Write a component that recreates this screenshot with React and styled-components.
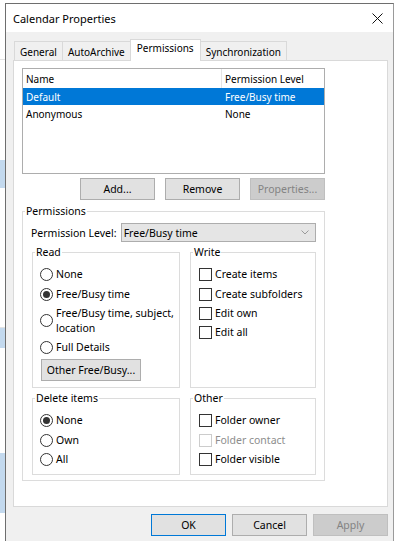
import React from "react";
import styled, { createGlobalStyle } from "styled-components";

const GlobalStyle = createGlobalStyle`
  body {
    margin: 0;
    font-family: "Noto Sans", "Open Sans", sans-serif;
    font-size: 10px;
    color: #000;
  }
  * { box-sizing: border-box; }
`;

const Screen = styled.div`
  display: flex;
  width: 395px;
  height: 541px;
  overflow: hidden;
  background: #fff;
`;

const Backdrop = styled.div`
  width: 5px;
  display: flex;
  flex-direction: column;
  flex: none;
`;

const BgBlock = styled.div`
  height: ${props => props.$h}px;
  background: ${props => props.$c || "#fff"};
  border-bottom: ${props => (props.$line ? "1px solid #e3e3e3" : "none")};
`;

const Window = styled.div`
  width: 389px;
  flex: none;
  margin-top: 3px;
  border: 1px solid #6e6e6e;
  border-right-color: #9a9a9a;
  border-bottom: none;
  background: #f0f0f0;
  display: flex;
  flex-direction: column;
`;

const TitleBar = styled.div`
  height: 28px;
  background: #fff;
  display: flex;
  align-items: center;
  justify-content: space-between;
  padding: 0 10px 0 7px;
`;

const Title = styled.span`
  font-size: 11px;
`;

const Body = styled.div`
  padding: 7px 5px 0 7px;
`;

const TabRow = styled.div`
  display: flex;
  align-items: flex-end;
  height: 22px;
  padding-left: 1px;
  margin-bottom: -1px;
  position: relative;
  z-index: 1;
`;

const Tab = styled.div`
  height: ${props => (props.$active ? "22px" : "19px")};
  margin-bottom: ${props => (props.$active ? "0" : "1px")};
  margin-left: -1px;
  padding: ${props => (props.$active ? "1px 6px 0" : "2px 5px 0")};
  background: ${props => (props.$active ? "#fff" : "#f0f0f0")};
  border: 1px solid #d9d9d9;
  border-bottom: none;
  display: flex;
  align-items: ${props => (props.$active ? "flex-start" : "center")};
  white-space: nowrap;
  font-size: 10px;
  &:first-child { margin-left: 0; }
`;

const Panel = styled.div`
  height: 447px;
  background: #fff;
  border: 1px solid #d9d9d9;
  padding: 7px 8px 0;
`;

const ListBox = styled.div`
  width: 303px;
  height: 106px;
  border: 1px solid #adadad;
  background: #fff;
`;

const ListRow = styled.div`
  display: grid;
  grid-template-columns: 199px 1fr;
  height: ${props => (props.$header ? "19px" : "17px")};
  align-items: center;
  background: ${props => (props.$selected ? "#0078d7" : "transparent")};
  color: ${props => (props.$selected ? "#fff" : "#000")};
`;

const Cell = styled.div`
  padding-left: 3px;
  height: 100%;
  display: flex;
  align-items: center;
  border-right: ${props => (props.$divider ? "1px solid #e5e5e5" : "none")};
`;

const ButtonRow = styled.div`
  width: 303px;
  display: flex;
  justify-content: flex-end;
  gap: 10px;
  margin-top: 4px;
`;

const Button = styled.button`
  width: ${props => props.$w || 75}px;
  height: 22px;
  margin: 0;
  padding: 0;
  font: inherit;
  font-size: 10.5px;
  background: ${props => (props.disabled ? "#cccccc" : "#e1e1e1")};
  border: 1px solid ${props => (props.$focused ? "#0078d7" : props.disabled ? "#bfbfbf" : "#adadad")};
  color: ${props => (props.disabled ? "#838383" : "#000")};
`;

const Group = styled.fieldset`
  margin: 0;
  padding: 0;
  border: 1px solid #dcdcdc;
  min-width: 0;
`;

const Legend = styled.legend`
  padding: 0 1px;
  margin-left: ${props => props.$ml || 2}px;
  line-height: 14px;
  font-size: 10.5px;
`;

const PermGroup = styled(Group)`
  width: 303px;
  margin-top: 4px;
`;

const PermInner = styled.div`
  padding: 5px 8px 5px 9px;
`;

const LevelRow = styled.div`
  display: flex;
  align-items: center;
  height: 19px;
`;

const LevelLabel = styled.span`
  width: 90px;
  margin-left: -1px;
  font-size: 10.5px;
`;

const Combo = styled.div`
  width: 196px;
  height: 19px;
  background: #e5e5e5;
  border: 1px solid #adadad;
  display: flex;
  align-items: center;
  justify-content: space-between;
  padding: 0 6px 0 2px;
  font-size: 10.5px;
`;

const GroupGrid = styled.div`
  display: grid;
  grid-template-columns: 148px 126px;
  column-gap: 10px;
  row-gap: 3px;
  margin-top: 3px;
`;

const GroupBody = styled.div`
  padding: ${props => props.$pad || "5px 0 6px 7px"};
  height: ${props => (props.$h ? props.$h + "px" : "auto")};
`;

const Option = styled.div`
  display: flex;
  align-items: center;
  min-height: ${props => props.$h || 20}px;
  gap: 3px;
  font-size: 10.5px;
  color: ${props => (props.$disabled ? "#8d8d8d" : "#000")};
`;

const OptionText = styled.span`
  max-width: ${props => (props.$wrap ? "118px" : "none")};
  line-height: 15px;
`;

const RadioCircle = styled.span`
  width: 13px;
  height: 13px;
  flex: none;
  border: 1px solid #333;
  border-radius: 50%;
  background: #fff;
  display: flex;
  align-items: center;
  justify-content: center;
  &::after {
    content: "";
    width: 7px;
    height: 7px;
    border-radius: 50%;
    background: ${props => (props.$checked ? "#333" : "transparent")};
  }
`;

const CheckBox = styled.span`
  width: 13px;
  height: 13px;
  flex: none;
  border: 1px solid ${props => (props.$disabled ? "#cccccc" : "#333")};
  background: #fff;
`;

const OtherButtonWrap = styled.div`
  margin: 2px 0 0 1px;
`;

const Footer = styled.div`
  display: flex;
  justify-content: flex-end;
  gap: 6px;
  padding: 7px 0 0 0;
`;

const CloseIcon = () => (
  <svg width="11" height="11" viewBox="0 0 11 11">
    <path d="M0.5 0.5 L10.5 10.5 M10.5 0.5 L0.5 10.5" stroke="#111" strokeWidth="1" />
  </svg>
);

const Chevron = () => (
  <svg width="8" height="5" viewBox="0 0 8 5">
    <polyline points="0.5,0.5 4,4 7.5,0.5" fill="none" stroke="#9a9a9a" strokeWidth="1" />
  </svg>
);

const Radio = ({ label, checked, wrap, h }) => (
  <Option $h={h}>
    <RadioCircle $checked={checked} />
    <OptionText $wrap={wrap}>{label}</OptionText>
  </Option>
);

const Check = ({ label, disabled, h }) => (
  <Option $h={h} $disabled={disabled}>
    <CheckBox $disabled={disabled} />
    <OptionText>{label}</OptionText>
  </Option>
);

const tabs = ["General", "AutoArchive", "Permissions", "Synchronization"];

export default function App() {
  return (
    <>
      <GlobalStyle />
      <Screen>
        <Backdrop>
          <BgBlock $h={60} $line />
          <BgBlock $h={100} />
          <BgBlock $h={28} $c="#c3d9ee" />
          <BgBlock $h={140} $line />
          <BgBlock $h={20} $c="#c3d9ee" />
          <BgBlock $h={105} />
          <BgBlock $h={60} $c="#c3d9ee" />
          <BgBlock $h={28} />
        </Backdrop>
        <Window>
          <TitleBar>
            <Title>Calendar Properties</Title>
            <CloseIcon />
          </TitleBar>
          <Body>
            <TabRow>
              {tabs.map(t => (
                <Tab key={t} $active={t === "Permissions"}>{t}</Tab>
              ))}
            </TabRow>
            <Panel>
              <ListBox>
                <ListRow $header>
                  <Cell $divider>Name</Cell>
                  <Cell>Permission Level</Cell>
                </ListRow>
                <ListRow $selected>
                  <Cell>Default</Cell>
                  <Cell>Free/Busy time</Cell>
                </ListRow>
                <ListRow>
                  <Cell>Anonymous</Cell>
                  <Cell>None</Cell>
                </ListRow>
              </ListBox>
              <ButtonRow>
                <Button>Add...</Button>
                <Button>Remove</Button>
                <Button disabled>Properties...</Button>
              </ButtonRow>
              <PermGroup>
                <Legend $ml={2}>Permissions</Legend>
                <PermInner>
                  <LevelRow>
                    <LevelLabel>Permission Level:</LevelLabel>
                    <Combo>
                      <span>Free/Busy time</span>
                      <Chevron />
                    </Combo>
                  </LevelRow>
                  <GroupGrid>
                    <Group>
                      <Legend>Read</Legend>
                      <GroupBody>
                        <Radio label="None" />
                        <Radio label="Free/Busy time" checked />
                        <Radio label="Free/Busy time, subject, location" wrap h={33} />
                        <Radio label="Full Details" />
                        <OtherButtonWrap>
                          <Button $w={100}>Other Free/Busy...</Button>
                        </OtherButtonWrap>
                      </GroupBody>
                    </Group>
                    <Group>
                      <Legend>Write</Legend>
                      <GroupBody $pad="6px 0 0 8px" $h={128}>
                        <Check label="Create items" h={19.4} />
                        <Check label="Create subfolders" h={19.4} />
                        <Check label="Edit own" h={19.4} />
                        <Check label="Edit all" h={19.4} />
                      </GroupBody>
                    </Group>
                    <Group>
                      <Legend>Delete items</Legend>
                      <GroupBody $pad="6px 0 4px 7px">
                        <Radio label="None" checked h={19.5} />
                        <Radio label="Own" h={19.5} />
                        <Radio label="All" h={19.5} />
                      </GroupBody>
                    </Group>
                    <Group>
                      <Legend>Other</Legend>
                      <GroupBody $pad="6px 0 4px 8px">
                        <Check label="Folder owner" h={19.5} />
                        <Check label="Folder contact" disabled h={19.5} />
                        <Check label="Folder visible" h={19.5} />
                      </GroupBody>
                    </Group>
                  </GroupGrid>
                </PermInner>
              </PermGroup>
            </Panel>
            <Footer>
              <Button $focused>OK</Button>
              <Button>Cancel</Button>
              <Button disabled>Apply</Button>
            </Footer>
          </Body>
        </Window>
      </Screen>
    </>
  );
}
